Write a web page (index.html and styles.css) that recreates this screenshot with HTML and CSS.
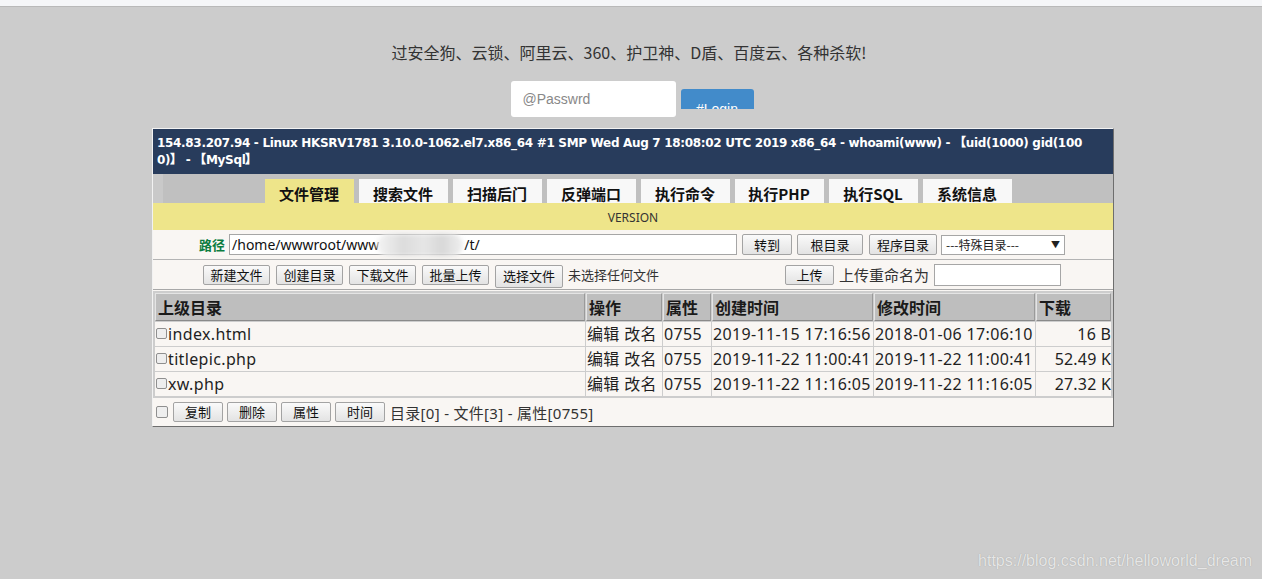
FILE: index.html
```html
<!DOCTYPE html>
<html lang="zh-CN">
<head>
<meta charset="utf-8">
<title>File Manager</title>
<link rel="stylesheet" href="styles.css">
</head>
<body>
<div class="topstrip"></div>
<p class="slogan">过安全狗、云锁、阿里云、360、护卫神、D盾、百度云、各种杀软!</p>
<form class="login">
  <input class="pass" type="password" placeholder="@Passwrd">
  <button class="login-btn" type="button">#Login</button>
</form>

<div class="panel">
  <div class="sysinfo">154.83.207.94 - Linux HKSRV1781 3.10.0-1062.el7.x86_64 #1 SMP Wed Aug 7 18:08:02 UTC 2019 x86_64 - whoami(www) - 【uid(1000) gid(100<br>0)】 - 【MySql】</div>
  <nav class="tabs">
    <a class="tab active">文件管理</a>
    <a class="tab">搜索文件</a>
    <a class="tab">扫描后门</a>
    <a class="tab">反弹端口</a>
    <a class="tab">执行命令</a>
    <a class="tab">执行PHP</a>
    <a class="tab">执行SQL</a>
    <a class="tab">系统信息</a>
  </nav>
  <div class="version">VERSION</div>

  <div class="pathrow">
    <span class="path-label">路径</span>
    <div class="pathbox">/home/wwwroot/www<span class="blur"></span>/t/</div>
    <button class="btn btn-go" type="button">转到</button>
    <button class="btn btn-root" type="button">根目录</button>
    <button class="btn btn-prog" type="button">程序目录</button>
    <div class="select"><span>---特殊目录---</span><span class="arrow">▼</span></div>
  </div>

  <div class="actrow">
    <div class="act-left">
      <button class="btn btn-act" type="button">新建文件</button>
      <button class="btn btn-act" type="button">创建目录</button>
      <button class="btn btn-act" type="button">下载文件</button>
      <button class="btn btn-act" type="button">批量上传</button>
      <button class="btn btn-file" type="button">选择文件</button>
      <span class="nofile">未选择任何文件</span>
    </div>
    <div class="act-right">
      <button class="btn btn-up" type="button">上传</button>
      <span class="rename">上传重命名为</span>
      <div class="rename-box"></div>
    </div>
  </div>

  <table class="files">
    <colgroup>
      <col class="c-name"><col class="c-op"><col class="c-attr"><col class="c-time"><col class="c-time"><col class="c-size">
    </colgroup>
    <thead>
      <tr><th>上级目录</th><th>操作</th><th>属性</th><th>创建时间</th><th>修改时间</th><th>下载</th></tr>
    </thead>
    <tbody>
      <tr><td><span class="cb"></span>index.html</td><td>编辑 改名</td><td>0755</td><td>2019-11-15 17:16:56</td><td>2018-01-06 17:06:10</td><td class="size">16 B</td></tr>
      <tr><td><span class="cb"></span>titlepic.php</td><td>编辑 改名</td><td>0755</td><td>2019-11-22 11:00:41</td><td>2019-11-22 11:00:41</td><td class="size">52.49 K</td></tr>
      <tr><td><span class="cb"></span>xw.php</td><td>编辑 改名</td><td>0755</td><td>2019-11-22 11:16:05</td><td>2019-11-22 11:16:05</td><td class="size">27.32 K</td></tr>
    </tbody>
  </table>

  <div class="foot">
    <span class="cb cb-foot"></span>
    <button class="btn btn-foot" type="button">复制</button>
    <button class="btn btn-foot" type="button">删除</button>
    <button class="btn btn-foot" type="button">属性</button>
    <button class="btn btn-foot" type="button">时间</button>
    <span class="summary">目录[0] - 文件[3] - 属性[0755]</span>
  </div>
</div>

<div class="watermark">https://blog.csdn.net/helloworld_dream</div>
</body>
</html>
```

FILE: styles.css
```css
* { box-sizing: border-box; }

html, body {
  margin: 0;
  height: 100%;
}

body {
  background: #cccccc;
  font-family: "Noto Sans", "Noto Sans CJK SC", sans-serif;
  color: #222;
  position: relative;
  overflow: hidden;
}

.topstrip {
  height: 7px;
  background: #f5f6f8;
  border-bottom: 1px solid #b9b9b9;
}

.slogan {
  margin: 35px 0 0;
  text-align: center;
  font-size: 16px;
  line-height: 20px;
  color: #333;
  font-family: "Noto Sans CJK SC", "Noto Sans", sans-serif;
  padding-right: 4px;
}

.login {
  display: flex;
  justify-content: center;
  align-items: flex-start;
  gap: 5px;
  margin: 19px 0 0;
  padding-left: 2px;
}

.pass {
  width: 165px;
  height: 36px;
  border: none;
  border-radius: 3px;
  background: #fff;
  padding: 0 12px;
  font-family: "Liberation Sans", Arial, sans-serif;
  font-size: 14px;
  outline: none;
}
.pass::placeholder { color: #888; }

.login-btn {
  width: 73px;
  height: 20px;
  margin-top: 8px;
  border: none;
  border-radius: 3px 3px 0 0;
  background: #428bca;
  color: #fff;
  font-family: "Liberation Sans", Arial, sans-serif;
  font-size: 14px;
  line-height: 16px;
  padding: 12px 0 0;
  overflow: hidden;
  display: block;
}

.panel {
  width: 962px;
  margin: 11px 0 0 152px;
  background: #f9f6f3;
  border: 1px solid;
  border-color: #f2f2f2 #6e6e6e #6e6e6e #f2f2f2;
}

.sysinfo {
  background: #283c5c;
  color: #fff;
  font-family: "DejaVu Sans", Verdana, sans-serif;
  font-weight: bold;
  font-size: 12px;
  letter-spacing: -0.32px;
  line-height: 17px;
  padding: 6px 4px 5px;
  white-space: nowrap;
  overflow: hidden;
  height: 45px;
}

.tabs {
  display: flex;
  justify-content: center;
  gap: 5px;
  height: 29px;
  padding-top: 5px;
  background: #c0c0c0;
  border-left: 10px solid #c9c9c9;
}

.tab {
  width: 89px;
  height: 24px;
  background: #f8f8f8;
  text-align: center;
  font-family: "Noto Sans CJK SC", "Noto Sans", sans-serif;
  font-weight: bold;
  font-size: 15px;
  line-height: 29px;
  color: #111;
  overflow: hidden;
}
.tab.active { background: #eee58a; }

.version {
  height: 27px;
  background: #eee58a;
  text-align: center;
  font-size: 12px;
  line-height: 29px;
  color: #333;
}

.btn {
  height: 21px;
  padding: 0;
  border: 1px solid #a3a3a3;
  border-radius: 2px;
  background: linear-gradient(#fafafa, #e3e3e3);
  font-family: "Noto Sans CJK SC", "Noto Sans", sans-serif;
  font-size: 13px;
  line-height: 18px;
  color: #111;
}

.pathrow {
  display: flex;
  align-items: center;
  height: 30px;
  padding-left: 46px;
  border-bottom: 1px solid #b4b4b4;
}

.path-label {
  font-family: "Noto Sans CJK SC", sans-serif;
  font-weight: bold;
  font-size: 13px;
  color: #0c7c40;
  margin-right: 4px;
}

.pathbox {
  width: 508px;
  height: 21px;
  border: 1px solid #a6a6a6;
  background: #fff;
  font-size: 14px;
  line-height: 19px;
  padding-left: 2px;
  display: flex;
  align-items: center;
  white-space: nowrap;
  color: #111;
}

.blur {
  display: inline-block;
  width: 86px;
  height: 22px;
  margin: 0 1px 0 -2px;
  background: linear-gradient(90deg, #f4f4f4, #dcdcdc 30%, #e6e6e6 55%, #d8d8d8 75%, #efefef);
  border-radius: 11px;
  filter: blur(2px);
}

.btn-go { width: 50px; margin-left: 5px; }
.btn-root { width: 66px; margin-left: 5px; }
.btn-prog { width: 68px; margin-left: 6px; }

.select {
  width: 124px;
  height: 20px;
  margin-left: 4px;
  border: 1px solid #a6a6a6;
  background: #fff;
  font-family: "Noto Sans CJK SC", sans-serif;
  font-size: 12px;
  line-height: 18px;
  padding: 0 4px;
  display: flex;
  justify-content: space-between;
  color: #222;
}
.arrow { font-size: 9px; }

.actrow {
  display: flex;
  align-items: center;
  height: 30px;
  padding: 0 52px 0 50px;
  border-bottom: 1px solid #a8a8a8;
}

.act-left, .act-right {
  display: flex;
  align-items: center;
}

.act-right { margin-left: auto; }

.btn-act { width: 67px; height: 20px; margin-right: 6px; }
.btn-file { width: 68px; height: 23px; margin-top: 3px; margin-right: 5px; }

.nofile {
  font-family: "Noto Sans CJK SC", sans-serif;
  font-size: 13px;
  color: #333;
}

.btn-up { width: 49px; height: 20px; margin-right: 5px; }

.rename {
  font-family: "Noto Sans CJK SC", sans-serif;
  font-size: 15px;
  color: #333;
  margin-right: 5px;
}

.rename-box {
  width: 127px;
  height: 22px;
  border: 1px solid #a6a6a6;
  background: #fff;
}

.files {
  width: 100%;
  border-collapse: separate;
  border-spacing: 1px;
  border: 1px solid #cdcdcd;
  background: #cdcdcd;
  font-size: 16px;
  margin-top: 1px;
}

.c-name { width: 430px; }
.c-op { width: 76px; }
.c-attr { width: 48px; }
.c-time { width: 161px; }
.c-size { width: 75px; }

.files th {
  height: 28px;
  padding: 0 2px;
  text-align: left;
  background: #bebebe;
  border: 1px solid;
  border-color: #e4e4e4 #9a9a9a #8a8a8a #e4e4e4;
  font-family: "Noto Sans CJK SC", sans-serif;
  font-weight: bold;
  font-size: 16px;
  color: #1a1a1a;
}

.files td {
  height: 24px;
  padding: 0 1px;
  background: #f9f6f3;
  line-height: 22px;
  white-space: nowrap;
  color: #1f1f1f;
  letter-spacing: 0.35px;
}

.files td.size { text-align: right; padding-right: 0; letter-spacing: 0.2px; }

.cb {
  display: inline-block;
  width: 11px;
  height: 11px;
  border: 1px solid #8f8f8f;
  border-radius: 2px;
  background: #eeeeee;
  vertical-align: 1px;
  margin-right: 1px;
}

.foot {
  display: flex;
  align-items: center;
  height: 28px;
  padding-left: 3px;
}

.cb-foot { width: 12px; height: 12px; margin-right: 5px; }

.btn-foot { width: 50px; height: 20px; margin-right: 4px; }

.summary {
  font-size: 15px;
  letter-spacing: 0.3px;
  color: #333;
  margin-left: 1px;
}

.watermark {
  position: absolute;
  right: 10px;
  bottom: 9px;
  font-family: "Liberation Sans", Arial, sans-serif;
  font-size: 16px;
  color: #e6e6e6;
  text-shadow: 0 0 1px #9a9a9a;
}
```
